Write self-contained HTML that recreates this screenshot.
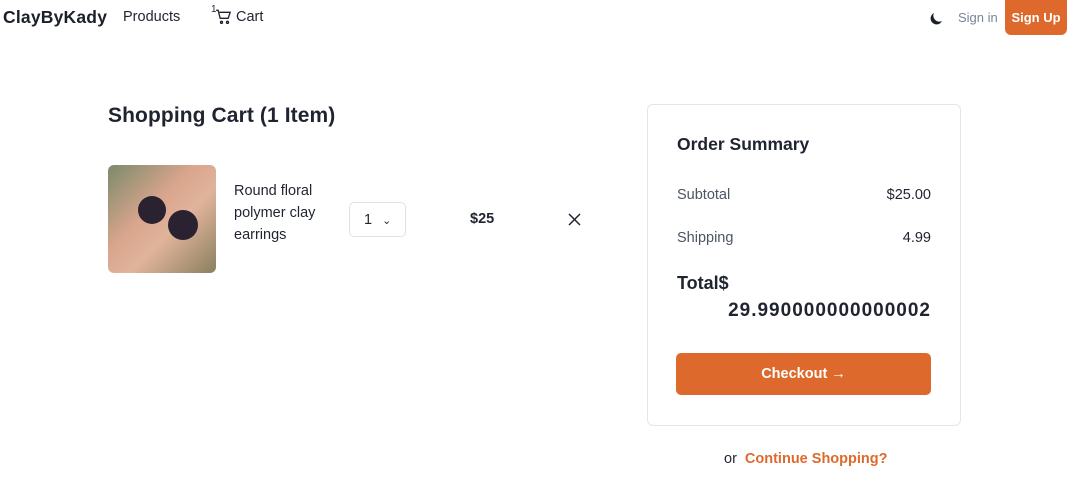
<!DOCTYPE html>
<html><head><style>
*{box-sizing:border-box;margin:0;padding:0}
body{width:1081px;height:491px;background:#fff;font-family:"Liberation Sans",Arial,sans-serif;color:#1f2430;position:relative;overflow:hidden}
.a{position:absolute;white-space:nowrap}
.r{position:absolute;white-space:nowrap;right:150px}
</style></head><body>
<div class="a" style="left:3px;top:7px;font-size:17.5px;font-weight:bold;color:#1b1f2a;letter-spacing:0.2px">ClayByKady</div>
<div class="a" style="left:123px;top:9px;font-size:14.5px">Products</div>
<div class="a" style="left:211px;top:4px;font-size:10px">1</div>
<svg class="a" style="left:215px;top:9px" width="17" height="16" viewBox="0 0 24 24" fill="none" stroke="#1f2430" stroke-width="2"><path d="M1 2h3l3 12h12l3-9H6"/><circle cx="9" cy="20" r="1.5"/><circle cx="18" cy="20" r="1.5"/></svg>
<div class="a" style="left:236px;top:9px;font-size:14.5px">Cart</div>
<svg class="a" style="left:929px;top:11px" width="15" height="15" viewBox="0 0 20 20"><path d="M17.3 13.4A8 8 0 016.6 2.7 8 8 0 1017.3 13.4z" fill="#1b1f2a"/></svg>
<div class="a" style="left:958px;top:10px;font-size:13px;color:#7a8494">Sign in</div>
<div class="a" style="left:1005px;top:0;width:62px;height:35px;background:#dd6a2c;border-radius:0 0 6px 6px;color:#fff;font-size:13px;font-weight:bold;text-align:center;line-height:35px">Sign Up</div>
<div class="a" style="left:108px;top:104px;font-size:21px;font-weight:bold;letter-spacing:0.1px">Shopping Cart (1 Item)</div>
<div class="a" style="left:108px;top:165px;width:108px;height:108px;border-radius:6px;background:linear-gradient(135deg,#7b8a6a,#d9a58d 40%,#e0b49b 60%,#8a7f5f)"></div>
<div class="a" style="left:138px;top:196px;width:28px;height:28px;border-radius:50%;background:#2a2230"></div>
<div class="a" style="left:168px;top:210px;width:30px;height:30px;border-radius:50%;background:#2a2230"></div>
<div class="a" style="left:234px;top:180px;font-size:14.5px;line-height:22px;white-space:normal;width:100px">Round floral polymer clay earrings</div>
<div class="a" style="left:349px;top:202px;width:57px;height:35px;border:1px solid #dde2ea;border-radius:5px;font-size:14.5px;padding:9px 0 0 14px">1 <span style="margin-left:6px;font-size:11px">&#8964;</span></div>
<div class="a" style="left:470px;top:211px;font-size:14.5px;font-weight:bold">$25</div>
<svg class="a" style="left:568px;top:213px" width="13" height="13" viewBox="0 0 13 13" stroke="#1f2430" stroke-width="1.5"><path d="M1 1l11 11M12 1L1 12"/></svg>
<div class="a" style="left:647px;top:104px;width:314px;height:322px;border:1px solid #e3e6ec;border-radius:6px"></div>
<div class="a" style="left:677px;top:134px;font-size:17.5px;font-weight:bold">Order Summary</div>
<div class="a" style="left:677px;top:187px;font-size:14.5px;color:#4b5563">Subtotal</div>
<div class="r" style="top:187px;font-size:14.5px">$25.00</div>
<div class="a" style="left:677px;top:230px;font-size:14.5px;color:#4b5563">Shipping</div>
<div class="r" style="top:230px;font-size:14.5px">4.99</div>
<div class="a" style="left:677px;top:273px;font-size:18px;font-weight:bold">Total$</div>
<div class="r" style="top:300px;font-size:19px;font-weight:bold;letter-spacing:1px">29.990000000000002</div>
<div class="a" style="left:676px;top:353px;width:255px;height:42px;background:#dd6a2c;border-radius:5px;color:#fff;font-size:14.5px;font-weight:bold;text-align:center;line-height:42px">Checkout &#8594;</div>
<div class="a" style="left:724px;top:451px;font-size:14.5px">or <span style="color:#dd6a2c;font-weight:bold;margin-left:4px">Continue Shopping?</span></div>
</body></html>
